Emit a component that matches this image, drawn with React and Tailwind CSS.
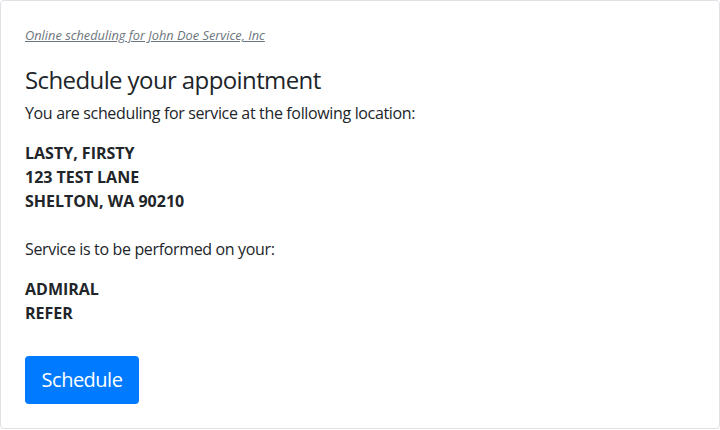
export default function App() {
  const font = { fontFamily: '"Open Sans", "Noto Sans", sans-serif' };
  return (
    <div className="w-[720px] h-[430px] bg-white text-[#212529]" style={font}>
      <div className="h-[429px] border border-[#dee2e6] rounded-[4px] px-[24px] pt-[25px]">
        <a href="#" className="block text-[12.8px] leading-[19px] italic text-[#6c757d] underline">
          Online scheduling for John Doe Service, Inc
        </a>
        <h4 className="mt-[20px] mb-[7px] text-[24px] leading-[29px] font-normal tracking-[-0.6px]">Schedule your appointment</h4>
        <p className="text-[16px] leading-[24px] mb-[16px] tracking-[-0.35px]">You are scheduling for service at the following location:</p>
        <div className="text-[16px] leading-[24px] font-bold">
          <div>LASTY, FIRSTY</div>
          <div>123 TEST LANE</div>
          <div>SHELTON, WA 90210</div>
        </div>
        <p className="mt-[24px] text-[16px] leading-[24px] mb-[16px] tracking-[-0.35px]">Service is to be performed on your:</p>
        <div className="text-[16px] leading-[24px] font-bold">
          <div>ADMIRAL</div>
          <div>REFER</div>
        </div>
        <button className="mt-[31px] h-[48px] w-[114px] rounded-[4px] bg-[#007bff] text-white text-[20px] leading-[30px] tracking-[-0.5px]">
          Schedule
        </button>
      </div>
    </div>
  );
}
